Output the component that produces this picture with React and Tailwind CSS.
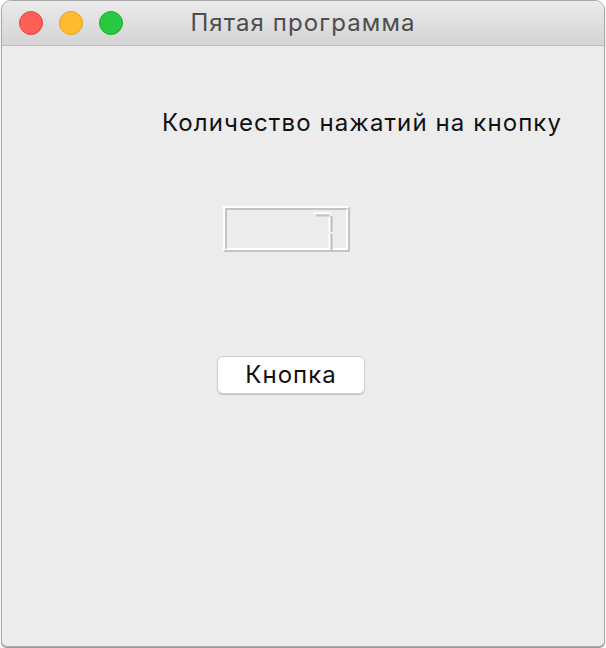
import React from "react";

const font = { fontFamily: "Inter, 'Noto Sans', sans-serif" };

const Light = ({ bg, ring }) => (
  <span className={`block w-6 h-6 rounded-full border ${bg} ${ring}`} />
);

const LcdSeven = () => (
  <svg width="22" height="42" viewBox="0 0 22 42" className="absolute right-[11px] top-[1px]">
    {/* top segment */}
    <path d="M1 2 L18 2" stroke="#ffffff" strokeWidth="1.5" fill="none" />
    <path d="M3 4.5 L16 4.5" stroke="#c2c2c2" strokeWidth="2" fill="none" />
    {/* right upper */}
    <path d="M16.5 6 L16.5 21" stroke="#ffffff" strokeWidth="2" fill="none" />
    <path d="M18.5 5 L18.5 21" stroke="#bdbdbd" strokeWidth="2" fill="none" />
    {/* right lower */}
    <path d="M16.5 23 L16.5 38" stroke="#ffffff" strokeWidth="2" fill="none" />
    <path d="M18.5 23 L18.5 39" stroke="#bdbdbd" strokeWidth="2" fill="none" />
  </svg>
);

export default function App() {
  return (
    <div className="w-[606px] h-[648px] bg-white" style={font}>
      <div className="ml-[1px] w-[604px] h-[647px] rounded-t-[10px] rounded-b-[6px] border border-[#a9a9a9] bg-[#ececec] overflow-hidden shadow-[0_1px_1px_rgba(0,0,0,0.45)] flex flex-col">
        {/* title bar */}
        <div className="relative h-[45px] shrink-0 bg-gradient-to-b from-[#ebebeb] to-[#d4d4d4] border-b border-[#bdbdbd] flex items-center">
          <div className="flex items-center gap-4 pl-[17px]">
            <Light bg="bg-[#fe5f57]" ring="border-[#e2463f]" />
            <Light bg="bg-[#febc2e]" ring="border-[#dfa023]" />
            <Light bg="bg-[#28c840]" ring="border-[#1dad2b]" />
          </div>
          <div className="absolute inset-0 flex items-center justify-center text-[24px] text-[#4d4d4d] tracking-[1.1px] pb-[1px]">
            Пятая программа
          </div>
        </div>

        {/* content */}
        <div className="flex-1 flex flex-col items-start">
          <div className="ml-[160px] mt-[62px] text-[24px] leading-[30px] tracking-[1.1px] text-[#111]">
            Количество нажатий на кнопку
          </div>

          <div className="ml-[221px] mt-[68px] w-[127px] h-[46px] border-2 border-t-white border-l-white border-r-[#c4c4c4] border-b-[#c4c4c4]">
            <div className="relative w-full h-full border-2 border-t-[#c4c4c4] border-l-[#c4c4c4] border-r-white border-b-white">
              <LcdSeven />
            </div>
          </div>

          <button className="ml-[215px] mt-[104px] w-[148px] h-[38px] rounded-[6px] bg-white border border-[#d0d0d0] shadow-[0_1px_1px_rgba(0,0,0,0.18)] text-[24px] tracking-[1px] text-[#111] flex items-center justify-center">
            Кнопка
          </button>
        </div>
      </div>
    </div>
  );
}
